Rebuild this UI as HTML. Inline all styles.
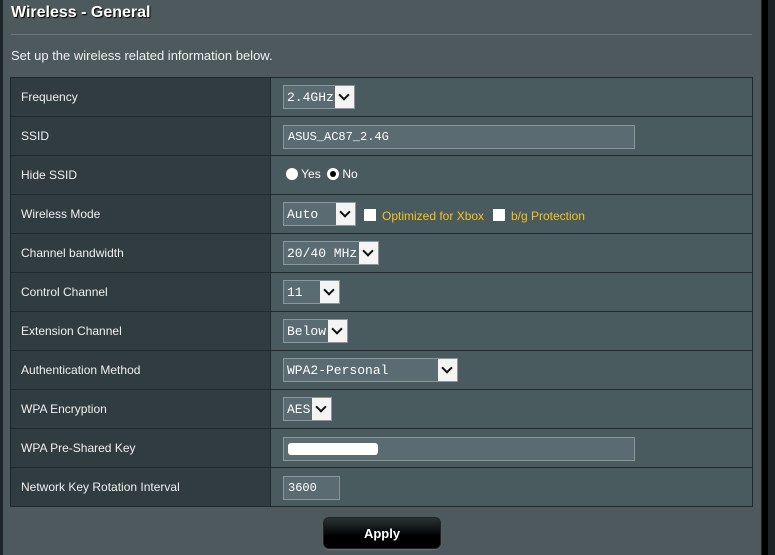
<!DOCTYPE html>
<html><head><meta charset="utf-8"><style>
*{margin:0;padding:0;box-sizing:border-box}
body{width:775px;height:555px;background:#4e595d;position:relative;overflow:hidden;font-family:"Liberation Sans",Arial,sans-serif;color:#fff}
.lstrip{position:absolute;left:0;top:0;width:3px;height:555px;background:#1f2629}
.rstrip{position:absolute;left:761px;top:0;width:14px;height:555px;background:#1b2326}
.rstrip:before{content:"";position:absolute;left:1px;top:0;width:6px;height:555px;background:#000}
h1{position:absolute;left:11px;top:4px;font-size:16px;font-weight:bold;color:#fff;text-shadow:1px 1px 1px #000}
.hr{position:absolute;left:11px;top:34px;width:741px;height:1px;background:#2e3639;border-bottom:1px solid #6b777b}
.intro{position:absolute;left:11px;top:48px;font-size:13px;color:#f0f0f0}
.tbl{position:absolute;left:10px;top:77px;width:743px;height:430px;border:1px solid #1f272a;background:#4a5b60}
.row{position:absolute;left:0;width:741px;height:39px;border-bottom:1px solid #22292c}
.lab{position:absolute;left:0;top:0;width:260px;height:38px;background:#313c40;border-right:1px solid #22292c;font-size:12px;color:#f0f0f0;padding:12px 0 0 10px}
.val{position:absolute;left:261px;top:0;height:38px;right:0}
.sel{position:absolute;top:7px;left:11px;height:24px;background:#5a6b71;border:1px solid #8b979b;font-family:"Liberation Mono",monospace;font-size:13px;color:#fff;padding:4px 0 0 3px}
.sel .ar{position:absolute;right:0;top:0;width:19px;height:22px;background:#f4f4f4}
.sel .ar:after{content:"";position:absolute;left:5px;top:5px;width:6px;height:6px;border-right:2px solid #111;border-bottom:2px solid #111;transform:rotate(45deg)}
.inp{position:absolute;top:8px;left:11px;height:24px;background:#5a6b71;border:1px solid #8b979b;font-family:"Liberation Mono",monospace;font-size:12px;color:#fff;padding:4px 0 0 4px}
.cb{display:inline-block;width:12px;height:12px;background:#fff;vertical-align:-1px;margin-right:6px}
.y{color:#f5c21b;font-size:12px}
.btn{position:absolute;left:323px;top:517px;width:118px;height:32px;border-radius:6px;background:linear-gradient(#2a3236,#000 60%);border:1px solid #222;color:#fff;font-weight:bold;font-size:13px;text-align:center;line-height:32px;box-shadow:0 1px 1px #6a7579}
</style></head><body>
<div class="lstrip"></div><div class="rstrip"></div>
<h1>Wireless - General</h1>
<div class="hr"></div>
<div class="intro">Set up the wireless related information below.</div>
<div class="tbl">
<div class="row" style="top:0"><div class="lab">Frequency</div><div class="val"><div class="sel" style="width:72px">2.4GHz<span class="ar"></span></div></div></div>
<div class="row" style="top:39px"><div class="lab">SSID</div><div class="val"><div class="inp" style="width:352px">ASUS_AC87_2.4G</div></div></div>
<div class="row" style="top:78px"><div class="lab">Hide SSID</div><div class="val" style="font-size:12px;padding:11px 0 0 14px">
<span style="display:inline-block;width:12px;height:12px;border-radius:50%;background:#fff;vertical-align:-2px"></span> Yes
<span style="display:inline-block;width:12px;height:12px;border-radius:50%;background:#fff;vertical-align:-2px;margin-left:3px;position:relative"><span style="position:absolute;left:3px;top:3px;width:6px;height:6px;border-radius:50%;background:#000"></span></span> No</div></div>
<div class="row" style="top:117px"><div class="lab">Wireless Mode</div><div class="val"><div class="sel" style="width:73px">Auto<span class="ar"></span></div>
<div style="position:absolute;left:92px;top:12px"><span class="cb"></span><span class="y">Optimized for Xbox</span> &nbsp;<span class="cb"></span><span class="y">b/g Protection</span></div></div></div>
<div class="row" style="top:156px"><div class="lab">Channel bandwidth</div><div class="val"><div class="sel" style="width:96px">20/40 MHz<span class="ar"></span></div></div></div>
<div class="row" style="top:195px"><div class="lab">Control Channel</div><div class="val"><div class="sel" style="width:57px">11<span class="ar"></span></div></div></div>
<div class="row" style="top:234px"><div class="lab">Extension Channel</div><div class="val"><div class="sel" style="width:65px">Below<span class="ar"></span></div></div></div>
<div class="row" style="top:273px"><div class="lab">Authentication Method</div><div class="val"><div class="sel" style="width:175px">WPA2-Personal<span class="ar"></span></div></div></div>
<div class="row" style="top:312px"><div class="lab">WPA Encryption</div><div class="val"><div class="sel" style="width:49px">AES<span class="ar"></span></div></div></div>
<div class="row" style="top:351px"><div class="lab">WPA Pre-Shared Key</div><div class="val"><div class="inp" style="width:352px"><span style="display:inline-block;width:90px;height:12px;background:#fff;border-radius:3px;margin-top:1px"></span></div></div></div>
<div class="row" style="top:390px;border-bottom:none"><div class="lab">Network Key Rotation Interval</div><div class="val"><div class="inp" style="width:57px">3600</div></div></div>
</div>
<div class="btn">Apply</div>
</body></html>
